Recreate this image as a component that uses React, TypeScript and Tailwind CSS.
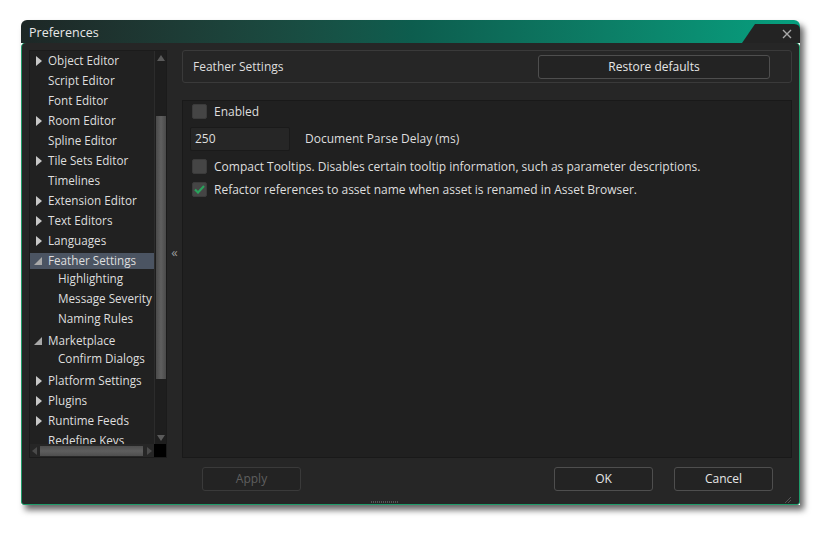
import React from "react";

type Node = { label: string; kind: "closed" | "open" | "leaf" | "child"; selected?: boolean };

const tree: Node[] = [
  { label: "Object Editor", kind: "closed" },
  { label: "Script Editor", kind: "leaf" },
  { label: "Font Editor", kind: "leaf" },
  { label: "Room Editor", kind: "closed" },
  { label: "Spline Editor", kind: "leaf" },
  { label: "Tile Sets Editor", kind: "closed" },
  { label: "Timelines", kind: "leaf" },
  { label: "Extension Editor", kind: "closed" },
  { label: "Text Editors", kind: "closed" },
  { label: "Languages", kind: "closed" },
  { label: "Feather Settings", kind: "open", selected: true },
  { label: "Highlighting", kind: "child" },
  { label: "Message Severity", kind: "child" },
  { label: "Naming Rules", kind: "child" },
  { label: "Marketplace", kind: "open" },
  { label: "Confirm Dialogs", kind: "child" },
  { label: "Platform Settings", kind: "closed" },
  { label: "Plugins", kind: "closed" },
  { label: "Runtime Feeds", kind: "closed" },
  { label: "Redefine Keys", kind: "leaf" },
];

const TreeRow = ({ node, prev, next }: { node: Node; prev?: Node; next?: Node }) => {
  const isChild = node.kind === "child";
  // expanded groups sit a little tighter than the top-level rows
  const shift = isChild && prev?.kind !== "child" ? "-mt-[2px]" : "";
  const after = isChild && next && next.kind !== "child" ? "mb-[2px]" : "";
  return (
    <div className={`relative h-[20px] flex items-center shrink-0 ${shift} ${after}`}>
      {node.selected && <div className="absolute left-0 right-0 top-[2px] h-[16px] bg-[#4b5462]" />}
      <div className="relative w-[18px] flex justify-end pr-[6px]">
        {node.kind === "closed" && (
          <svg width="6" height="10" viewBox="0 0 6 10">
            <path d="M0 0 L6 5 L0 10 Z" fill="#c8c8c8" />
          </svg>
        )}
        {node.kind === "open" && (
          <svg width="8" height="8" viewBox="0 0 8 8">
            <path d="M8 0 L8 8 L0 8 Z" fill="#a8a8a8" />
          </svg>
        )}
      </div>
      <span className={`relative whitespace-nowrap ${isChild ? "pl-[10px]" : ""}`}>{node.label}</span>
    </div>
  );
};

const Check = ({ checked }: { checked?: boolean }) => (
  <div className="w-[15px] h-[15px] rounded-[2px] bg-[#454545] border border-[#3b3b3b] flex items-center justify-center shrink-0">
    {checked && (
      <svg width="11" height="9" viewBox="0 0 11 9">
        <path d="M1 4.5 L4 7.5 L10 1" stroke="#29a35c" strokeWidth="2.2" fill="none" />
      </svg>
    )}
  </div>
);

const Btn = ({ label, disabled, w = "w-[99px]" }: { label: string; disabled?: boolean; w?: string }) => (
  <div
    className={`${w} h-[24px] rounded-[3px] border bg-[#232323] flex items-center justify-center ${
      disabled ? "border-[#3a3a3a] text-[#5f5f5f]" : "border-[#4e4e4e] text-[#e6e6e6]"
    }`}
  >
    {label}
  </div>
);

export default function App() {
  return (
    <div
      className="w-[821px] h-[533px] bg-white pt-[20px] pl-[21px] text-[12px] text-[#dedede]"
      style={{ fontFamily: '"Open Sans", "Noto Sans", sans-serif' }}
    >
      <div className="w-[779px] h-[485px] flex flex-col rounded-t-[6px] shadow-[4px_5px_6px_rgba(0,0,0,0.6)]">
        {/* title bar */}
        <div className="relative h-[23px] rounded-t-[6px] bg-gradient-to-r from-[#1d2726] via-[#0d5d4e] to-[#06a07f] flex items-center pl-[8px] pt-[3px] text-[12.5px] text-[#e8e8e8]">
          Preferences
          <div className="absolute right-0 bottom-0 w-[58px] h-[19px]">
            <svg width="58" height="19" viewBox="0 0 58 19" className="absolute inset-0">
              <path d="M0 19 L13 0 L52 0 Q58 0 58 6 L58 19 Z" fill="#232323" />
            </svg>
            <svg width="10" height="10" viewBox="0 0 10 10" className="absolute right-[8px] top-[5px]">
              <path d="M1 1 L9 9 M9 1 L1 9" stroke="#a9a9a9" strokeWidth="1.4" />
            </svg>
          </div>
        </div>

        {/* body */}
        <div className="-mt-[1px] flex-1 bg-[#262626] border border-[#1f9b6a] rounded-t-[5px] rounded-b-[3px] flex flex-col px-[7px] pt-[7px]">
          <div className="flex h-[408px]">
            {/* tree */}
            <div className="w-[138px] flex flex-col border border-[#1b1b1b] bg-[#212121] text-[11.7px]">
              <div className="flex flex-1 min-h-0">
                <div className="flex-1 overflow-hidden flex flex-col">
                  {tree.map((n, i) => (
                    <TreeRow key={n.label} node={n} prev={tree[i - 1]} next={tree[i + 1]} />
                  ))}
                </div>
                <div className="w-[12px] bg-[#1e1e1e] border-l border-[#2c2c2c] flex flex-col items-center">
                  <svg width="8" height="6" viewBox="0 0 8 6" className="mt-[4px]">
                    <path d="M0 6 L4 0 L8 6 Z" fill="#5a5a5a" />
                  </svg>
                  <div className="mt-[55px] w-[10px] h-[263px] bg-gradient-to-r from-[#4a4a4a] via-[#5f5f5f] to-[#4a4a4a]" />
                  <div className="flex-1" />
                  <svg width="8" height="6" viewBox="0 0 8 6" className="mb-[3px]">
                    <path d="M0 0 L4 6 L8 0 Z" fill="#5a5a5a" />
                  </svg>
                </div>
              </div>
              <div className="h-[13px] flex">
                <div className="flex-1 bg-[#262626] flex items-center px-[2px]">
                  <svg width="5" height="8" viewBox="0 0 5 8">
                    <path d="M5 0 L0 4 L5 8 Z" fill="#4a4a4a" />
                  </svg>
                  <div className="ml-[3px] w-[103px] h-[10px] bg-gradient-to-b from-[#4e4e4e] via-[#5e5e5e] to-[#4e4e4e]" />
                  <div className="flex-1" />
                  <svg width="5" height="8" viewBox="0 0 5 8">
                    <path d="M0 0 L5 4 L0 8 Z" fill="#4a4a4a" />
                  </svg>
                </div>
                <div className="w-[12px] bg-black" />
              </div>
            </div>

            {/* collapse handle */}
            <div className="w-[15px] flex items-center justify-center text-[#9a9a9a] text-[13px] pb-[2px]">«</div>

            {/* right side */}
            <div className="flex-1 flex flex-col">
              <div className="h-[33px] border border-[#3a3a3a] rounded-[3px] flex items-center pl-[10px] pr-[21px]">
                <span>Feather Settings</span>
                <div className="flex-1" />
                <Btn label="Restore defaults" w="w-[232px]" />
              </div>
              <div className="mt-[17px] flex-1 bg-[#202020] border border-[#191919] flex flex-col pl-[9px]">
                <div className="h-[21px] flex items-center gap-[7px]">
                  <Check />
                  <span>Enabled</span>
                </div>
                <div className="mt-[5px] h-[24px] flex items-center">
                  <div className="w-[100px] h-[24px] bg-[#262626] border border-[#1a1a1a] rounded-[2px] flex items-center pl-[4px] -ml-[2px]">
                    250
                  </div>
                  <span className="ml-[15px]">Document Parse Delay (ms)</span>
                </div>
                <div className="mt-[5px] h-[21px] flex items-center gap-[7px]">
                  <Check />
                  <span>Compact Tooltips. Disables certain tooltip information, such as parameter descriptions.</span>
                </div>
                <div className="mt-[2px] h-[21px] flex items-center gap-[7px]">
                  <Check checked />
                  <span>Refactor references to asset name when asset is renamed in Asset Browser.</span>
                </div>
              </div>
            </div>
          </div>

          {/* footer */}
          <div className="relative flex-1 flex items-start pt-[9px] pl-[173px] pr-[19px]">
            <Btn label="Apply" disabled />
            <div className="flex-1" />
            <Btn label="OK" />
            <div className="w-[21px]" />
            <Btn label="Cancel" />
            <div className="absolute left-[342px] bottom-[1px] w-[28px] h-[2px] bg-[repeating-linear-gradient(90deg,#555_0_1px,transparent_1px_2px)]" />
            <svg width="8" height="8" viewBox="0 0 8 8" className="absolute right-[0px] bottom-[0px]">
              <path d="M7 1 L1 7 M7 4 L4 7" stroke="#555" strokeWidth="1" />
            </svg>
          </div>
        </div>
      </div>
    </div>
  );
}
